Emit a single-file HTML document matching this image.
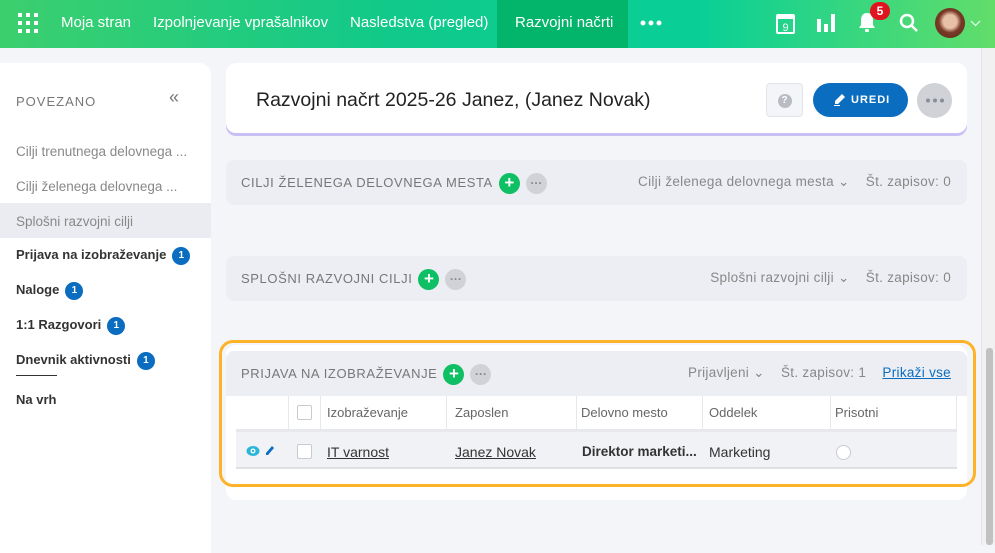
<!DOCTYPE html>
<html><head><meta charset="utf-8"><style>
*{box-sizing:border-box;margin:0;padding:0}
body{width:995px;height:545px;overflow:hidden;background:#f4f5f9;font-family:"Liberation Sans",sans-serif;position:relative;color:#333}
.nav{position:absolute;left:0;top:0;width:995px;height:48px;background:linear-gradient(90deg,#3ccf6e 0%,#10c98a 40%,#08cf97 70%,#62dd6a 100%);color:#fff;font-size:15px}
.nav .it{position:absolute;top:0;height:48px;line-height:46px;white-space:nowrap}
.nav .act{background:#03b56a;padding:0 18px}
.side{position:absolute;left:0;top:63px;width:211px;height:490px;background:#fff;border-radius:0 12px 0 0}
.side .h{position:absolute;left:16px;top:31px;font-size:13px;letter-spacing:1px;color:#777}
.side .l{position:absolute;left:16px;font-size:13.5px;color:#888;white-space:nowrap}
.side .b{color:#333;font-weight:bold;font-size:13px}
.bd{display:inline-block;width:18px;height:18px;border-radius:9px;background:#0a6dbf;color:#fff;font-size:10px;text-align:center;line-height:18px;margin-left:6px;vertical-align:1px;font-weight:bold}
.card{position:absolute;background:#fff;border-radius:10px}
.panel{position:absolute;left:226px;width:741px;height:45px;background:#eceef4;border-radius:8px}
.pt{position:absolute;left:15px;top:12px;font-size:13px;letter-spacing:0.6px;color:#777;white-space:nowrap;line-height:21px}
.plus{display:inline-block;width:21px;height:21px;border-radius:11px;background:#0fbf63;color:#fff;text-align:center;line-height:20px;font-size:17px;font-weight:bold;vertical-align:middle;margin-left:6px;letter-spacing:0}
.dots{display:inline-block;width:21px;height:21px;border-radius:11px;background:#d0d2d8;color:#888;text-align:center;line-height:21px;font-size:12px;font-weight:bold;vertical-align:middle;margin-left:6px;letter-spacing:0}
.pr{position:absolute;right:16px;top:14px;font-size:13.5px;color:#888;letter-spacing:0.3px;white-space:nowrap}
.c{position:absolute;font-size:13px;white-space:nowrap}
</style></head><body>
<div class="nav">
 <svg style="position:absolute;left:18px;top:13px" width="20" height="20" fill="#fff"><g><rect x="0" y="0" width="4" height="4"/><rect x="8" y="0" width="4" height="4"/><rect x="16" y="0" width="4" height="4"/><rect x="0" y="8" width="4" height="4"/><rect x="8" y="8" width="4" height="4"/><rect x="16" y="8" width="4" height="4"/><rect x="0" y="16" width="4" height="4"/><rect x="8" y="16" width="4" height="4"/><rect x="16" y="16" width="4" height="4"/></g></svg>
 <div class="it" style="left:61px">Moja stran</div>
 <div class="it" style="left:153px">Izpolnjevanje vprašalnikov</div>
 <div class="it" style="left:350px">Nasledstva (pregled)</div>
 <div class="it act" style="left:497px;width:131px">Razvojni načrti</div>
 <svg style="position:absolute;left:640px;top:20px" width="22" height="6" fill="#fff"><circle cx="3" cy="3" r="2.5"/><circle cx="11" cy="3" r="2.5"/><circle cx="19" cy="3" r="2.5"/></svg>
 <svg style="position:absolute;left:776px;top:12px" width="19" height="22"><rect x="1" y="3" width="17" height="18" rx="1" fill="none" stroke="#fff" stroke-width="2"/><rect x="1" y="3" width="17" height="4" fill="#fff"/><text x="9.5" y="19" font-size="11" fill="#fff" text-anchor="middle" font-family="Liberation Sans">9</text></svg>
 <svg style="position:absolute;left:817px;top:14px" width="19" height="18" fill="#fff"><rect x="0" y="5" width="4" height="13"/><rect x="7" y="10" width="4" height="8"/><rect x="14" y="0" width="4" height="18"/></svg>
 <svg style="position:absolute;left:858px;top:12px" width="18" height="21" fill="#fff"><path d="M9 1C5 1 3 4 3 8v5l-2 3h16l-2-3V8c0-4-2-7-6-7z"/><rect x="7" y="17" width="4" height="3" rx="1"/></svg>
 <div style="position:absolute;left:870px;top:2px;width:20px;height:18px;border-radius:10px;background:#e0141e;font-size:12px;font-weight:bold;text-align:center;line-height:18px">5</div>
 <svg style="position:absolute;left:899px;top:13px" width="20" height="20" fill="none" stroke="#fff" stroke-width="2.5"><circle cx="8" cy="8" r="6"/><path d="M12 12l6 6"/></svg>
 <div style="position:absolute;left:935px;top:8px;width:30px;height:30px;border-radius:15px;background:radial-gradient(circle at 50% 45%,#e8c0a8 0 30%,#7a3a28 50%,#5a2a1a 100%)"></div>
 <svg style="position:absolute;left:970px;top:20px" width="11" height="7" fill="none" stroke="#e8fff0" stroke-width="1.2"><path d="M1 1l4.5 4.5L10 1"/></svg>
</div>

<div class="side">
 <div class="h">POVEZANO</div>
 <div style="position:absolute;left:169px;top:24px;font-size:18px;color:#777">«</div>
 <div class="l" style="top:81px">Cilji trenutnega delovnega ...</div>
 <div class="l" style="top:116px">Cilji želenega delovnega ...</div>
 <div style="position:absolute;left:0;top:140px;width:211px;height:35px;background:#ebecf1"></div>
 <div class="l" style="top:151px">Splošni razvojni cilji</div>
 <div class="l b" style="top:184px">Prijava na izobraževanje<span class="bd">1</span></div>
 <div class="l b" style="top:219px">Naloge<span class="bd">1</span></div>
 <div class="l b" style="top:254px">1:1 Razgovori<span class="bd">1</span></div>
 <div class="l b" style="top:289px">Dnevnik aktivnosti<span class="bd">1</span></div>
 <div style="position:absolute;left:16px;top:312px;width:41px;height:1px;background:#333"></div>
 <div class="l b" style="top:329px">Na vrh</div>
</div>

<div class="card" style="left:226px;top:63px;width:741px;height:70px;box-shadow:0 3px 0 #c9bff5">
 <div style="position:absolute;left:30px;top:26px;font-size:19.5px;color:#222;white-space:nowrap">Razvojni načrt 2025-26 Janez, (Janez Novak)</div>
 <div style="position:absolute;left:540px;top:20px;width:37px;height:34px;border:1px solid #e3e5ea;border-radius:4px;background:#f4f5f8"><div style="margin:10px auto;width:14px;height:14px;border-radius:7px;background:#b9bcc3;color:#fff;font-size:10px;font-weight:bold;text-align:center;line-height:14px">?</div></div>
 <div style="position:absolute;left:587px;top:20px;width:95px;height:34px;border-radius:17px;background:#0a6dbf;color:#fff;font-size:11px;font-weight:bold;letter-spacing:1px;line-height:34px;padding-left:38px">UREDI</div>
 <svg style="position:absolute;left:608px;top:30px" width="12" height="13" fill="#fff"><path d="M8 1l3 3-7 7H1V8z"/><rect x="0" y="12" width="6" height="1"/></svg>
 <div style="position:absolute;left:691px;top:20px;width:35px;height:35px;border-radius:18px;background:#d0d2d8"></div>
 <svg style="position:absolute;left:699px;top:35px" width="20" height="5" fill="#8a8d95"><circle cx="3" cy="2.5" r="2"/><circle cx="10" cy="2.5" r="2"/><circle cx="17" cy="2.5" r="2"/></svg>
</div>

<div class="panel" style="top:160px"><div class="pt">CILJI ŽELENEGA DELOVNEGA MESTA<span class="plus">+</span><span class="dots">···</span></div><div class="pr">Cilji želenega delovnega mesta &#8964;&nbsp;&nbsp;&nbsp;&nbsp;Št. zapisov: 0</div></div>
<div class="panel" style="top:256px"><div class="pt">SPLOŠNI RAZVOJNI CILJI<span class="plus">+</span><span class="dots">···</span></div><div class="pr">Splošni razvojni cilji &#8964;&nbsp;&nbsp;&nbsp;&nbsp;Št. zapisov: 0</div></div>

<div class="card" style="left:226px;top:345px;width:741px;height:155px"></div>
<div style="position:absolute;left:219px;top:340px;width:757px;height:147px;border:3px solid #fdb329;border-radius:14px"></div>
<div class="panel" style="top:351px;border-radius:8px 8px 0 0"><div class="pt">PRIJAVA NA IZOBRAŽEVANJE<span class="plus">+</span><span class="dots">···</span></div><div class="pr">Prijavljeni &#8964;&nbsp;&nbsp;&nbsp;&nbsp;Št. zapisov: 1&nbsp;&nbsp;&nbsp;&nbsp;<span style="color:#0a6dbf;text-decoration:underline">Prikaži vse</span></div></div>

<div style="position:absolute;left:236px;top:429px;width:721px;height:40px;background:#f1f2f5;border-top:3px solid #e7e8ec;border-bottom:2px solid #dfe0e4"></div>
<div style="position:absolute;left:236px;top:396px;width:721px;height:73px">
 <div style="position:absolute;left:52px;top:0;width:1px;height:33px;background:#e7e8ec"></div>
 <div style="position:absolute;left:84px;top:0;width:1px;height:33px;background:#e7e8ec"></div>
 <div style="position:absolute;left:210px;top:0;width:1px;height:33px;background:#e7e8ec"></div>
 <div style="position:absolute;left:340px;top:0;width:1px;height:33px;background:#e7e8ec"></div>
 <div style="position:absolute;left:466px;top:0;width:1px;height:33px;background:#e7e8ec"></div>
 <div style="position:absolute;left:594px;top:0;width:1px;height:33px;background:#e7e8ec"></div>
 <div style="position:absolute;left:720px;top:0;width:1px;height:33px;background:#e7e8ec"></div>
</div>
<div style="position:absolute;left:297px;top:405px;width:15px;height:15px;border:1px solid #c8cad0;border-radius:2px;background:#fff"></div>
<div class="c" style="left:327px;top:405px;color:#666">Izobraževanje</div>
<div class="c" style="left:455px;top:405px;color:#666">Zaposlen</div>
<div class="c" style="left:581px;top:405px;color:#666">Delovno mesto</div>
<div class="c" style="left:709px;top:405px;color:#666">Oddelek</div>
<div class="c" style="left:835px;top:405px;color:#666">Prisotni</div>

<svg style="position:absolute;left:246px;top:444px" width="32" height="14"><ellipse cx="7" cy="7" rx="6.5" ry="5" fill="#2bb5d8"/><circle cx="7" cy="7" r="2.5" fill="#fff"/><circle cx="7" cy="7" r="1.2" fill="#2bb5d8"/><path d="M26 2l2 2-6 7h-2v-2z" fill="#0a6dbf"/></svg>
<div style="position:absolute;left:297px;top:444px;width:15px;height:15px;border:1px solid #c8cad0;border-radius:2px;background:#fff"></div>
<div class="c" style="left:327px;top:444px;font-size:14px;text-decoration:underline;color:#333">IT varnost</div>
<div class="c" style="left:455px;top:444px;font-size:14px;text-decoration:underline;color:#333">Janez Novak</div>
<div class="c" style="left:582px;top:444px;font-size:13.5px;font-weight:bold;color:#333">Direktor marketi...</div>
<div class="c" style="left:709px;top:444px;font-size:14px;color:#333">Marketing</div>
<div style="position:absolute;left:836px;top:445px;width:15px;height:15px;border:1px solid #c8cad0;border-radius:8px;background:#fff"></div>

<div style="position:absolute;left:981px;top:48px;width:14px;height:497px;background:#f1f1f1;border-left:1px solid #e5e5e5"></div>
<div style="position:absolute;left:986px;top:348px;width:7px;height:197px;background:#c1c1c1;border-radius:3px"></div>
</body></html>
